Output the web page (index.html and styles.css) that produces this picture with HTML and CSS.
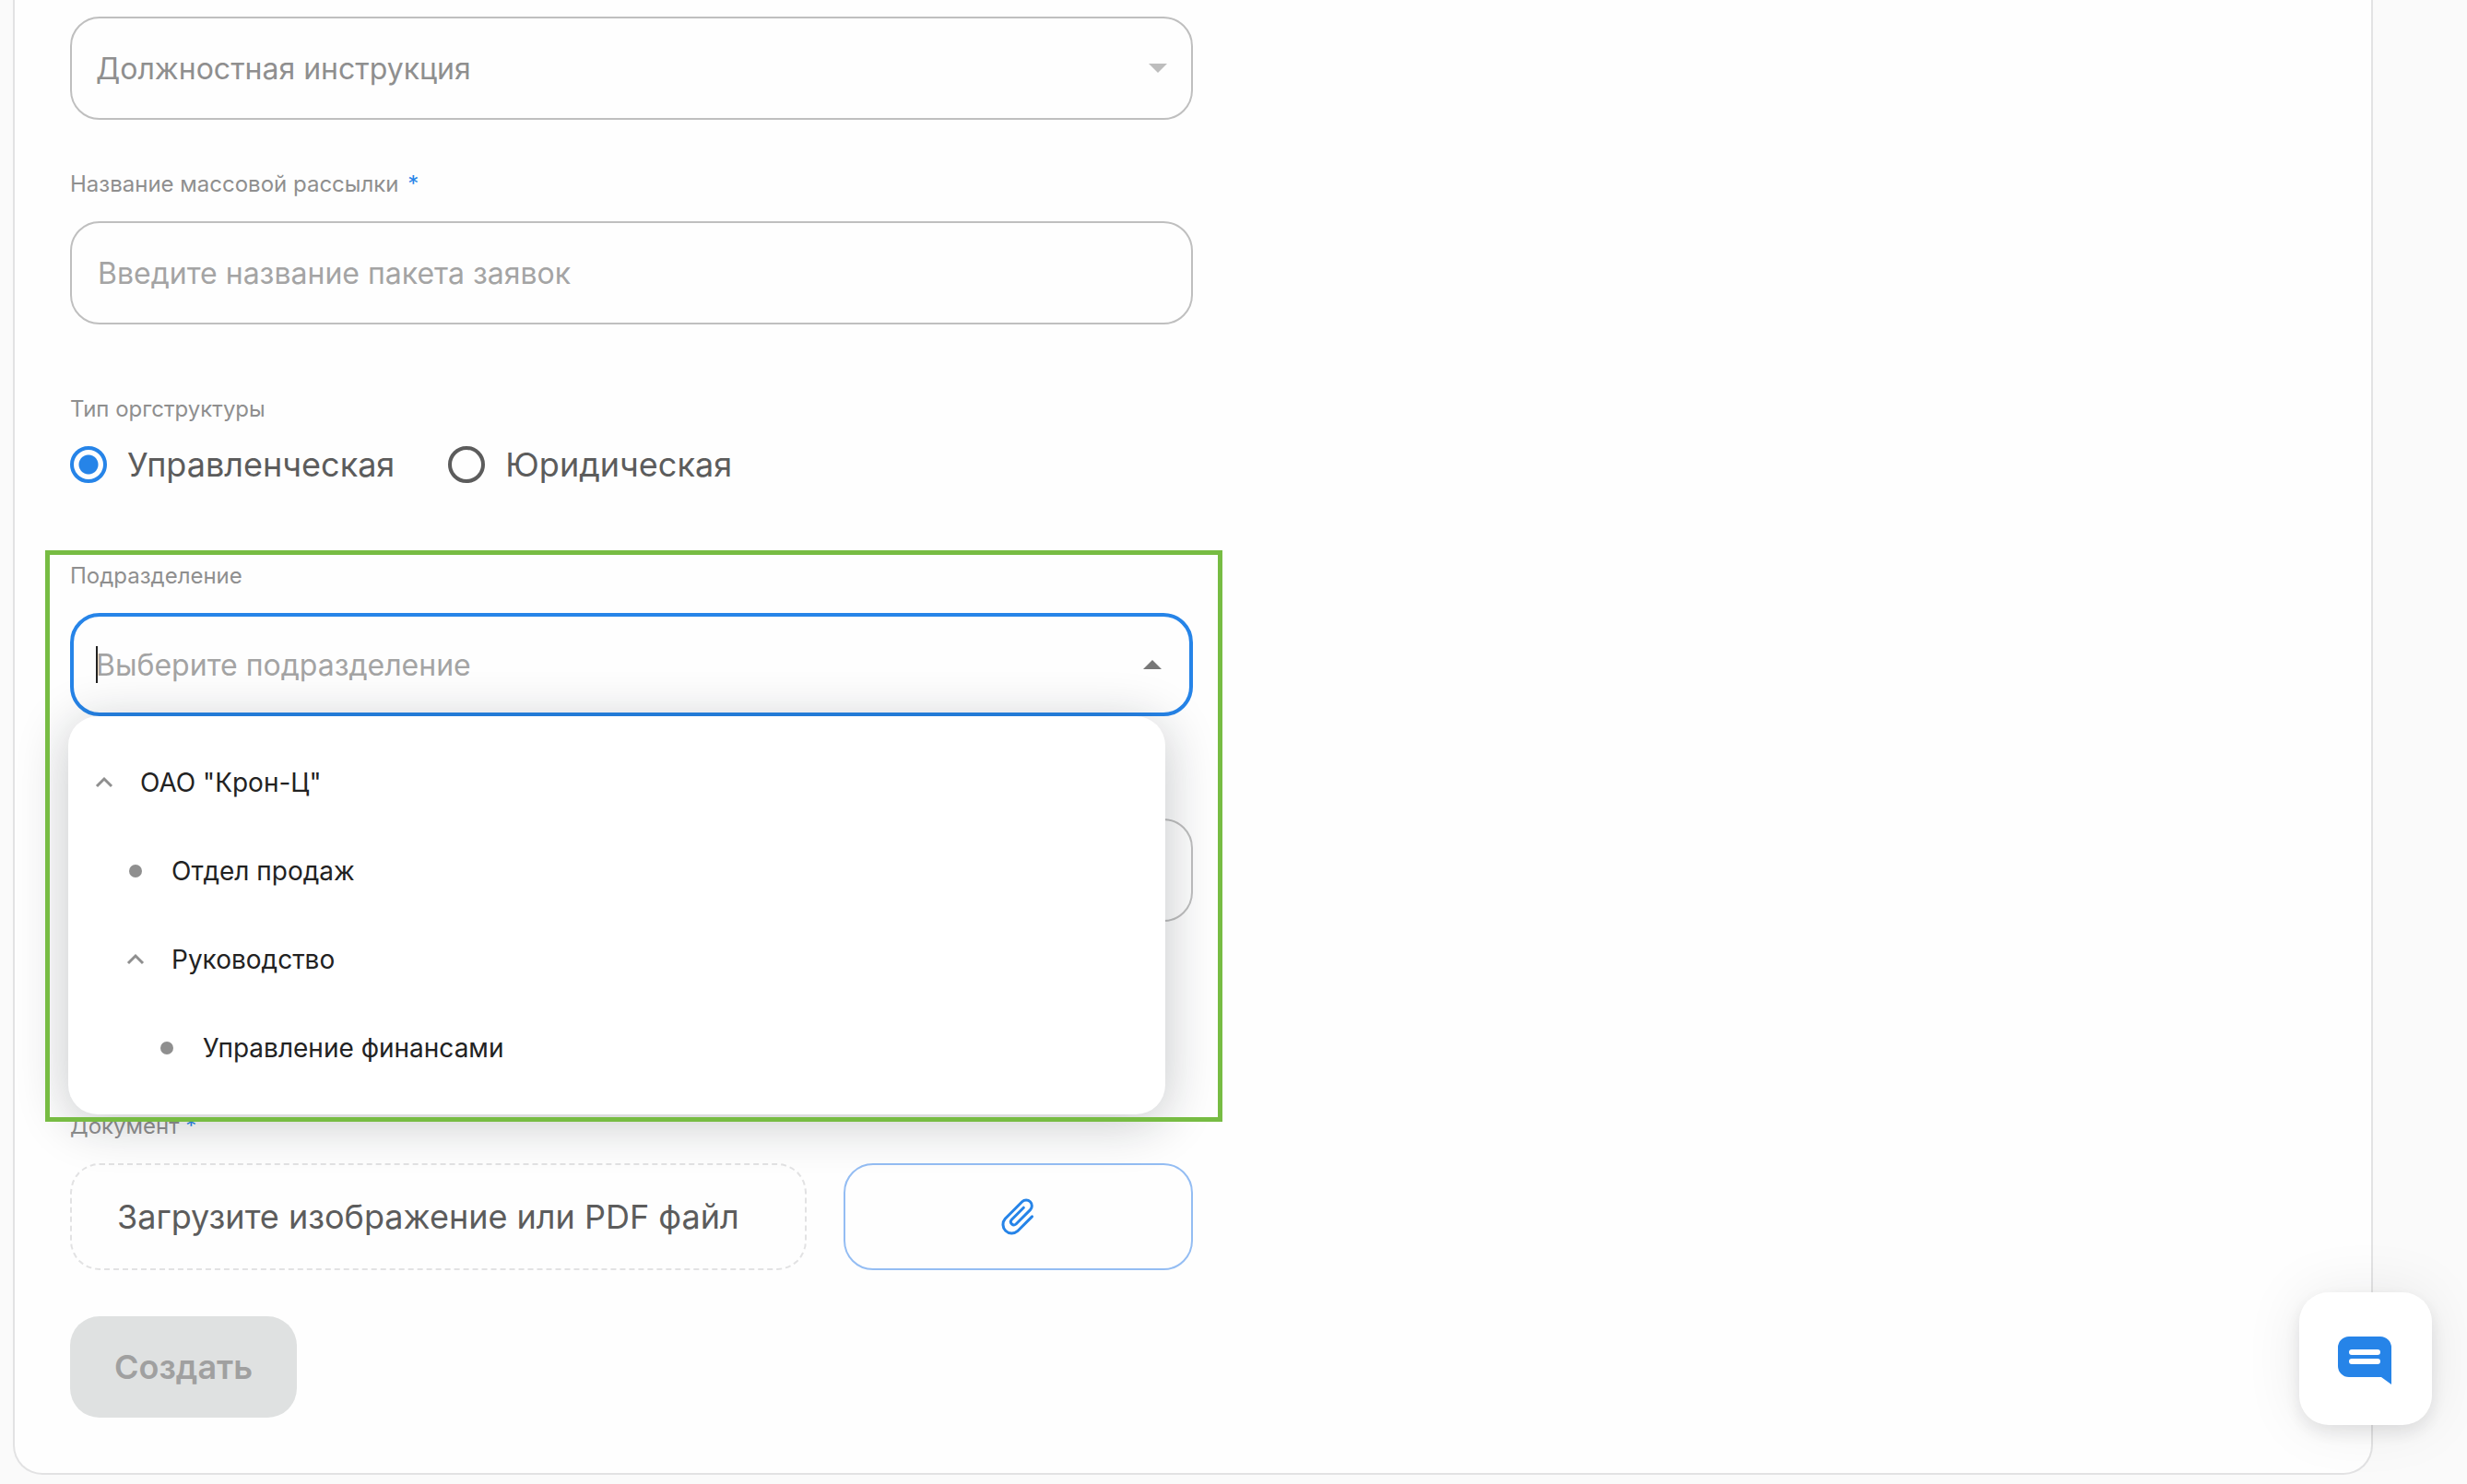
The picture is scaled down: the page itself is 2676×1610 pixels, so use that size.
FILE: index.html
```html
<!DOCTYPE html>
<html lang="ru">
<head>
  <meta charset="utf-8">
  <meta name="viewport" content="width=device-width, initial-scale=1">
  <title>Массовая рассылка</title>
  <link rel="stylesheet" href="styles.css">
</head>
<body>
  <main class="card">
    <form class="form">
      <div class="control control--first">
        <select class="box box--select" aria-label="Тип документа">
          <option>Должностная инструкция</option>
        </select>
        <svg class="arrow arrow--down" viewBox="0 0 20 10" aria-hidden="true"><path d="M0 0h20L10 10z"/></svg>
      </div>

      <div class="field field--name">
        <label class="label" for="name">Название массовой рассылки <span class="star star--spaced">*</span></label>
        <input class="box" id="name" type="text" placeholder="Введите название пакета заявок">
      </div>

      <fieldset class="field field--type">
        <legend class="label">Тип оргструктуры</legend>
        <div class="radios">
          <label class="radio"><input class="radio__input" type="radio" name="structure" checked>Управленческая</label>
          <label class="radio"><input class="radio__input" type="radio" name="structure">Юридическая</label>
        </div>
      </fieldset>

      <div class="field field--department">
        <label class="label" for="department">Подразделение</label>
        <div class="control">
          <input class="box box--active" id="department" type="text" role="combobox" aria-expanded="true" aria-controls="departments" placeholder="Выберите подразделение">
          <span class="caret"></span>
          <svg class="arrow arrow--up" viewBox="0 0 20 10" aria-hidden="true"><path d="M0 10h20L10 0z"/></svg>
          <ul class="tree" id="departments" role="tree">
            <li class="tree__row" role="treeitem">
              <svg class="tree__icon" viewBox="0 0 20 20" aria-hidden="true"><path class="chevron" d="M2 14l8-8 8 8"/></svg>
              <span>ОАО "Крон-Ц"</span>
            </li>
            <li class="tree__row tree__row--2" role="treeitem">
              <svg class="tree__icon" viewBox="0 0 20 20" aria-hidden="true"><circle class="dot" cx="10" cy="10" r="7"/></svg>
              <span>Отдел продаж</span>
            </li>
            <li class="tree__row tree__row--2" role="treeitem">
              <svg class="tree__icon" viewBox="0 0 20 20" aria-hidden="true"><path class="chevron" d="M2 14l8-8 8 8"/></svg>
              <span>Руководство</span>
            </li>
            <li class="tree__row tree__row--3" role="treeitem">
              <svg class="tree__icon" viewBox="0 0 20 20" aria-hidden="true"><circle class="dot" cx="10" cy="10" r="7"/></svg>
              <span>Управление финансами</span>
            </li>
          </ul>
        </div>
        <div class="highlight"></div>
      </div>

      <div class="field field--extra">
        <input class="box" type="text" aria-label="Сотрудник">
      </div>

      <div class="field field--document">
        <label class="label" for="attach">Документ <span class="star">*</span></label>
        <div class="upload">
          <div class="upload__hint">Загрузите изображение или PDF файл</div>
          <button class="upload__button" id="attach" type="button" aria-label="Прикрепить файл">
            <svg class="clip" viewBox="0 0 36 40" aria-hidden="true"><path d="M34.5 19.9L18.7 35.7A9.5 9.5 0 0 1 5.3 22.3L23.7 3.8A6.2 6.2 0 0 1 32.5 12.6L17.1 28A3.4 3.4 0 0 1 12.3 23.2L25.3 10.2"/></svg>
          </button>
        </div>
      </div>

      <button class="submit" type="submit" disabled>Создать</button>
    </form>
  </main>

  <button class="chat" type="button" aria-label="Открыть чат">
    <svg class="chat__icon" viewBox="0 0 58 52" aria-hidden="true">
      <path class="chat__bubble" d="M12 0H46A12 12 0 0 1 58 12V52L47 44H12A12 12 0 0 1 0 32V12A12 12 0 0 1 12 0Z"/>
      <path class="chat__lines" d="M15 17H43M15 27H43"/>
    </svg>
  </button>
</body>
</html>
```
FILE: styles.css
```css
* {
  box-sizing: border-box;
}

body {
  margin: 0;
  background: #fafafa;
  font-family: Inter, "Liberation Sans", sans-serif;
  color: #5c5c5c;
}

input,
select,
button {
  font-family: inherit;
}

.card {
  margin: 0 102px 8px 14px;
  padding: 18px 60px 60px;
  border: 2px solid #e2e2e3;
  border-top: 0;
  border-radius: 0 0 32px 32px;
  background: #fefefe;
}

.form {
  display: flex;
  flex-direction: column;
  align-items: stretch;
  max-width: 1218px;
}

/* Fields */

.field {
  position: relative;
  display: flex;
  flex-direction: column;
  gap: 24px;
  min-width: 0;
  margin: 0;
  padding: 0;
  border: 0;
}

.field--name {
  margin-top: 54px;
}

.field--type {
  margin-top: 76px;
}

.field--department {
  z-index: 1;
  margin-top: 85px;
}

.field--extra {
  margin-top: 111px;
}

.field--document {
  margin-top: 206px;
}

.label {
  padding: 0;
  font-size: 24px;
  line-height: 32px;
  color: #8f8f8f;
}

.star {
  color: #2684e8;
}

.star--spaced {
  margin-left: 3px;
}

.control {
  position: relative;
  display: grid;
  align-items: center;
}

.control > .box,
.control > .arrow,
.control > .caret {
  grid-area: 1 / 1;
}

.box {
  width: 100%;
  height: 112px;
  padding: 0 28px;
  border: 2px solid #bfbfbf;
  border-radius: 32px;
  outline: 0;
  background: transparent;
  font-size: 32px;
  color: #8f8f8f;
}

.box::placeholder {
  color: #a4a4a4;
  opacity: 1;
}

.box--select {
  padding: 0 26px;
  appearance: none;
}

.box--active {
  padding: 0 24px;
  border: 4px solid #2684e8;
}

.caret {
  width: 2px;
  height: 40px;
  margin-left: 28px;
  background: #222222;
}

.arrow {
  justify-self: end;
  width: 20px;
  height: 10px;
  pointer-events: none;
}

.arrow--down {
  margin-right: 28px;
  fill: #bdbdbd;
}

.arrow--up {
  margin-right: 34px;
  fill: #777777;
}

/* Radio buttons */

.radios {
  display: flex;
  gap: 58px;
  margin-top: 24px;
}

.radio {
  display: flex;
  align-items: center;
  gap: 22px;
  font-size: 36px;
  line-height: 40px;
}

.radio__input {
  width: 40px;
  height: 40px;
  margin: 0;
  border: 4px solid #5c5c5c;
  border-radius: 50%;
  appearance: none;
}

.radio__input:checked {
  border-color: #2684e8;
  background: radial-gradient(circle, #2684e8 10px, transparent 11px);
}

/* Department tree */

.tree {
  position: absolute;
  top: 100%;
  left: -2px;
  right: 30px;
  margin: 0;
  padding: 24px 29px;
  border-radius: 32px;
  background: #ffffff;
  box-shadow: 0 8px 56px rgba(15, 23, 32, 0.24);
  list-style: none;
}

.tree__row {
  display: flex;
  align-items: center;
  gap: 29px;
  height: 96px;
  font-size: 28px;
  color: #222222;
}

.tree__row--2 {
  padding-left: 34px;
}

.tree__row--3 {
  padding-left: 68px;
}

.tree__icon {
  width: 20px;
  height: 20px;
}

.chevron {
  fill: none;
  stroke: #8f8f8f;
  stroke-width: 3;
}

.dot {
  fill: #8f8f8f;
}

.highlight {
  position: absolute;
  top: -12px;
  left: -27px;
  right: -32px;
  height: 620px;
  border: 5px solid #77bc43;
  pointer-events: none;
}

/* Upload */

.upload {
  display: flex;
  gap: 40px;
}

.upload__hint {
  flex: 1;
  height: 116px;
  padding: 0 49px;
  border: 2px dashed #e2e2e3;
  border-radius: 32px;
  font-size: 36px;
  line-height: 112px;
}

.upload__button {
  display: grid;
  place-items: center;
  width: 379px;
  padding: 0 4px 0 0;
  border: 2px solid #94bdf3;
  border-radius: 32px;
  background: transparent;
}

.clip {
  width: 36px;
  height: 40px;
  fill: none;
  stroke: #2684e8;
  stroke-width: 3;
  stroke-linecap: round;
}

.submit {
  align-self: flex-start;
  height: 110px;
  margin-top: 50px;
  padding: 0 48px;
  border: 0;
  border-radius: 32px;
  background: #dfe1e1;
  font-size: 36px;
  font-weight: 600;
  color: #a0a0a0;
}

/* Chat launcher */

.chat {
  position: fixed;
  right: 38px;
  bottom: 64px;
  z-index: 2;
  display: grid;
  place-items: center;
  width: 144px;
  height: 144px;
  padding: 4px 2px 0 0;
  border: 0;
  border-radius: 32px;
  background: #ffffff;
  box-shadow: 0 8px 20px rgba(15, 23, 32, 0.1), 0 0 64px rgba(15, 23, 32, 0.08);
}

.chat__icon {
  width: 58px;
  height: 52px;
}

.chat__bubble {
  fill: #2684e8;
}

.chat__lines {
  fill: none;
  stroke: #ffffff;
  stroke-width: 6;
  stroke-linecap: round;
}
```
